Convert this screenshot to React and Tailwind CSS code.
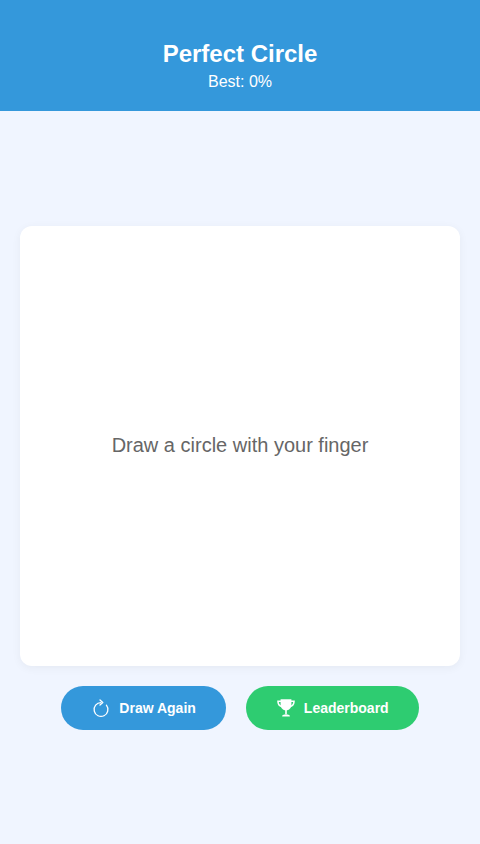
import React from 'react';

const RefreshIcon = () => (
  <svg width="20" height="20" viewBox="0 0 20 20" fill="none" stroke="currentColor" strokeWidth="1.3" strokeLinecap="round" strokeLinejoin="round">
    <path d="M10 4.6 A6.9 6.9 0 1 0 15.4 7.2" />
    <path d="M9 2 L11.8 4.6 L9 7" />
  </svg>
);

const TrophyIcon = () => (
  <svg width="20" height="20" viewBox="0 0 20 20" fill="currentColor">
    <path d="M4.6 1.2h10.8v5.6c0 3.2-2.4 5.6-5.4 5.6S4.6 10 4.6 6.8z" />
    <path d="M5 2.4H1.2c0 3.9 1.4 6.3 4.8 6.9L5.2 7.5C3.9 7 3 5.9 2.8 4H5zM15 2.4h3.8c0 3.9-1.4 6.3-4.8 6.9l.8-1.8c1.3-.5 2.2-1.6 2.4-3.5H15z" />
    <path d="M9.2 12h1.6v4.6H9.2z" />
    <path d="M6.2 17.6c.5-.8 1.7-1.2 3.8-1.2s3.3.4 3.8 1.2v.9H6.2z" />
  </svg>
);

const App = () => {
  return (
    <div className="flex flex-col h-[844px] bg-[#f0f5ff] text-white font-['Liberation_Sans',Arial,sans-serif]">
      <header className="bg-[#3498db] pt-10 pb-5 text-center">
        <h1 className="text-2xl font-bold leading-7 mb-[5px]">Perfect Circle</h1>
        <p className="text-base leading-[18px]">Best: 0%</p>
      </header>

      <main className="flex-1 flex flex-col items-center justify-center">
        {/* Drawing area */}
        <div className="w-[440px] h-[440px] bg-white rounded-xl shadow-[0_2px_10px_rgba(0,0,0,0.05)] flex items-center justify-center">
          <p className="text-xl leading-[23px] text-[#666666]">Draw a circle with your finger</p>
        </div>

        <div className="flex gap-5 mt-5">
          <button className="flex items-center gap-2 h-11 px-[30px] rounded-full bg-[#3498db] text-sm font-bold">
            <RefreshIcon />
            Draw Again
          </button>
          <button className="flex items-center gap-2 h-11 px-[30px] rounded-full bg-[#2ecc71] text-sm font-bold">
            <TrophyIcon />
            Leaderboard
          </button>
        </div>
      </main>
    </div>
  );
};

export default App;
